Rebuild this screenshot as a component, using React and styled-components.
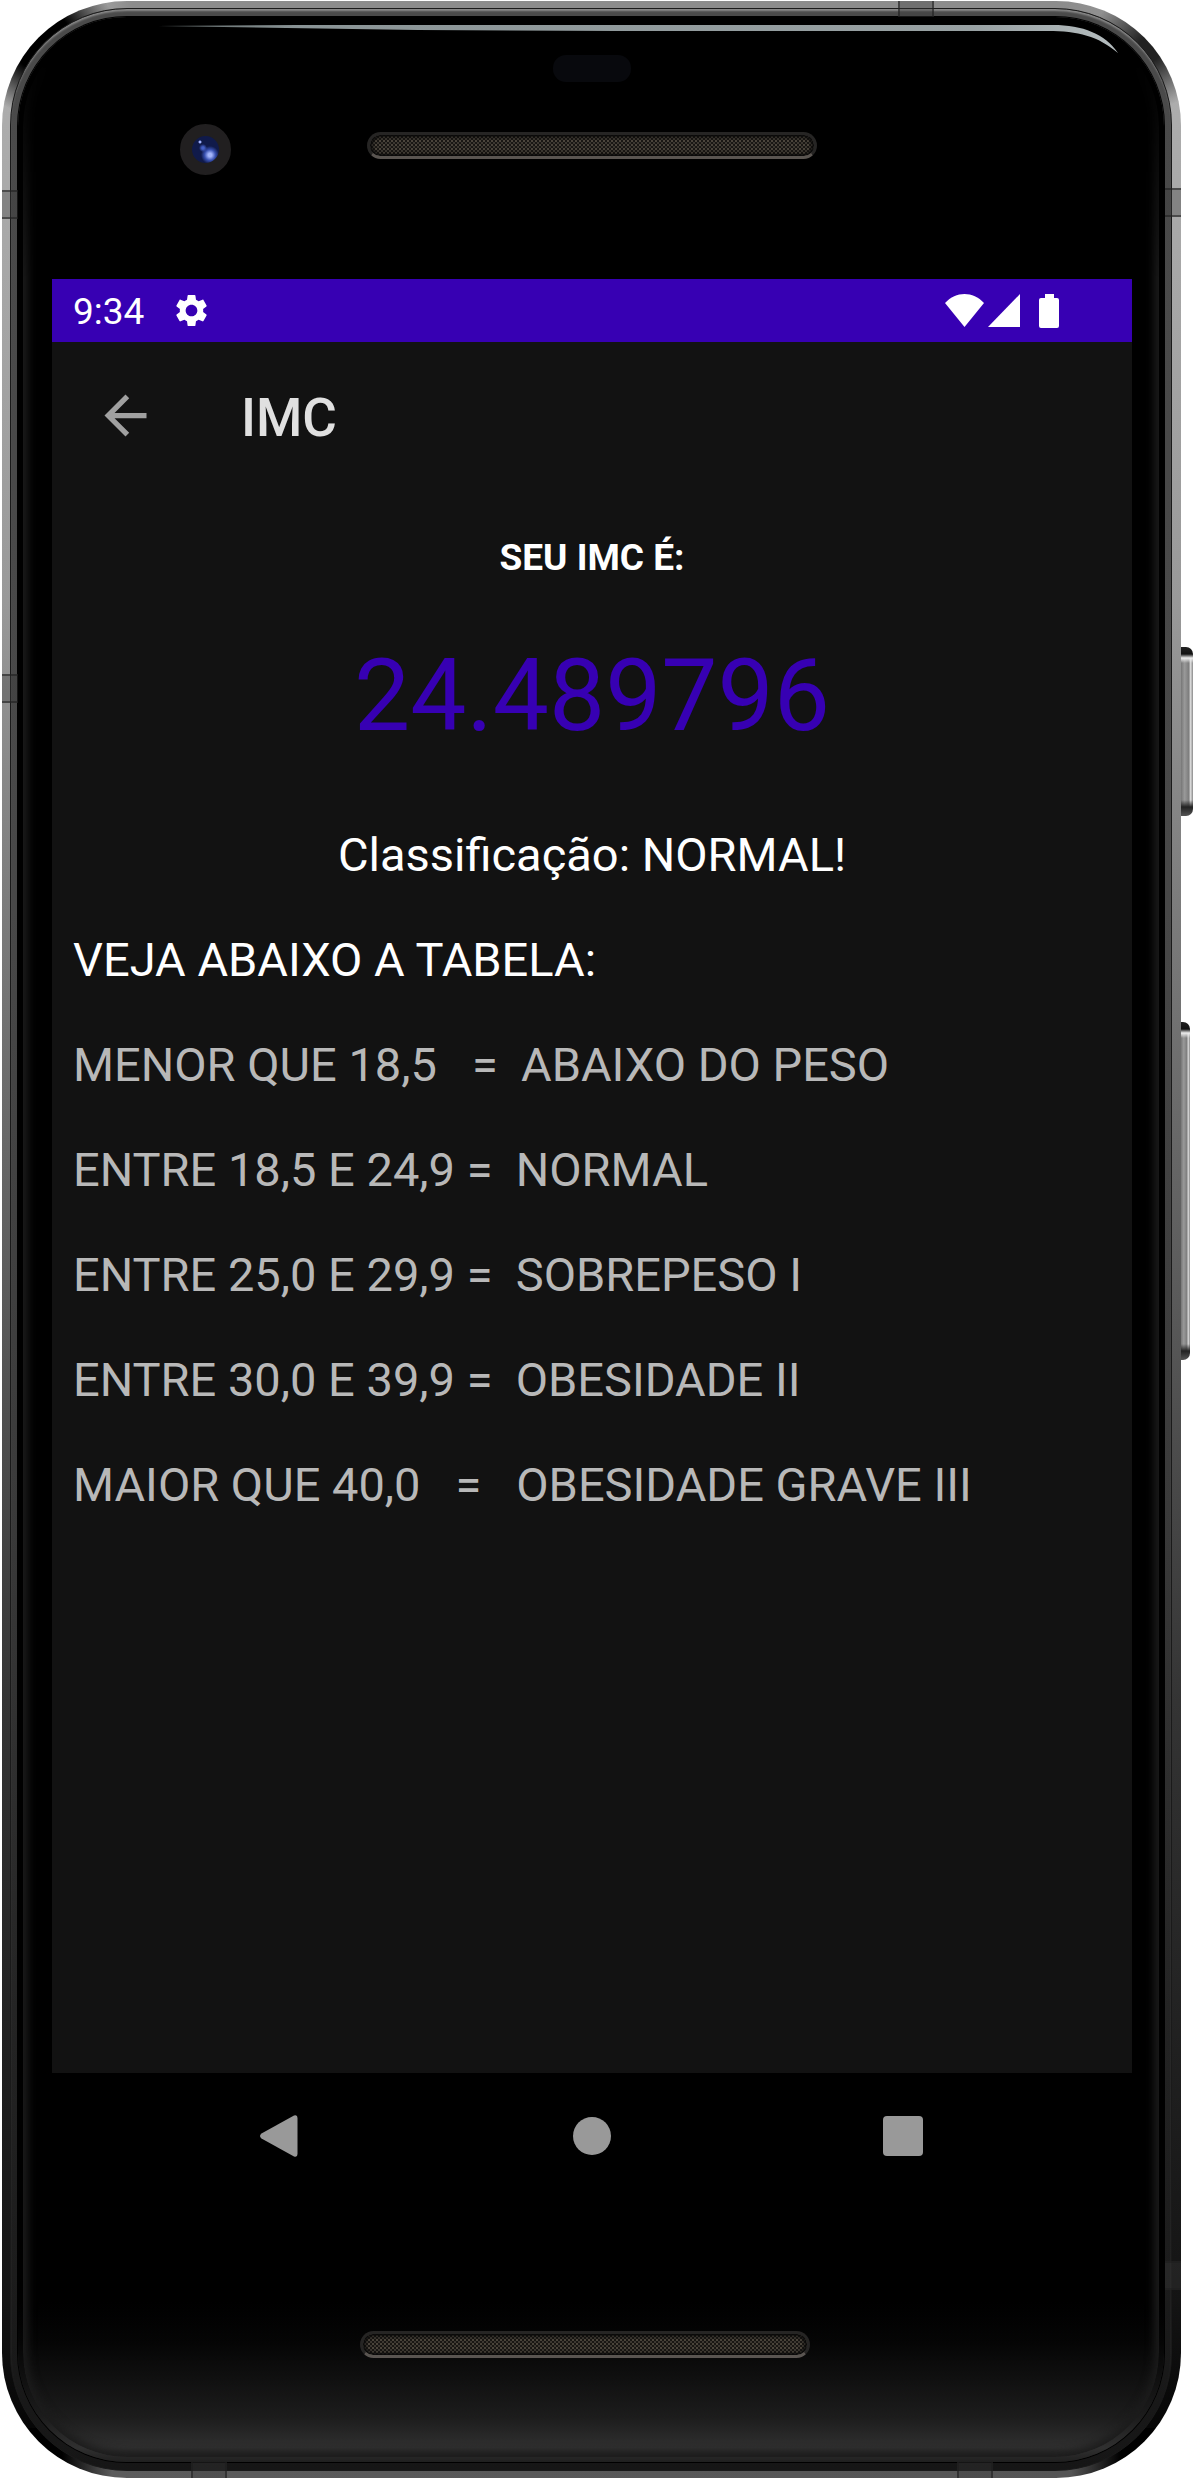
import React from "react";
import styled, { createGlobalStyle } from "styled-components";

const GlobalStyle = createGlobalStyle`
  *, *::before, *::after { box-sizing: border-box; }
  body {
    margin: 0;
    background: #fff;
    font-family: Roboto, "Noto Sans", sans-serif;
  }
`;

/* ---------- Handset ---------- */

const Page = styled.div`
  display: flex;
  min-height: 100vh;
  padding: 1px 13px 2px 2px;
`;

const Chassis = styled.div`
  position: relative;
  display: flex;
  flex: 1;
  min-width: 0;
  padding: 7px 9px 7px 8px;
  border-radius: 125px;
  background:
    radial-gradient(circle 75px at 40px 40px, #000 40%, rgba(0, 0, 0, 0) 100%),
    radial-gradient(circle 60px at calc(100% - 32px) 48px, #222 20%, rgba(34, 34, 34, 0) 100%),
    linear-gradient(90deg, rgba(0, 0, 0, 0) 70px, #8c8c8c 130px, #8c8c8c calc(100% - 120px), #999 100%) top / 100% 40px no-repeat,
    linear-gradient(90deg, #000 60px, #5c5c5c 110px, #555 calc(100% - 110px), #000 calc(100% - 60px)) bottom / 100% 50px no-repeat,
    linear-gradient(180deg, #b0b0b0 0, #a6a6a6 300px, #999 600px, #7c7c7c 900px, #5a5a5a 1300px, #343434 1700px, #202020 2050px, #141414 2300px, #000 100%);
`;

const Rim = styled.div`
  display: flex;
  flex: 1;
  min-width: 0;
  padding: 8px 7px;
  border: 1px solid #1a1a1a;
  border-radius: 117px;
  background: linear-gradient(180deg, #4a4a4a 0, #484848 900px, #3a3a3a 1500px, #242424 2000px, #161616 100%);
  box-shadow: inset 0 3px 2px -1px #8a8a8a;
`;

const Glass = styled.div`
  position: relative;
  display: flex;
  flex: 1;
  flex-direction: column;
  min-width: 0;
  padding: 0 32px 0 34px;
  border-radius: 109px;
  background: linear-gradient(0deg, #202020 0, #303030 14px, #272727 28px, #1c1c1c 45px, #111 80px, #050505 120px, #000 160px);
  box-shadow: 0 0 0 1px #000;

  &::before {
    content: "";
    position: absolute;
    inset: 5px;
    border-radius: 104px;
    box-shadow: inset 0 0 8px 5px #1c1c1c;
    mask-image: linear-gradient(180deg, transparent 40px, #000 260px);
    pointer-events: none;
  }
`;

const Glare = styled.svg`
  position: absolute;
  top: 7px;
  left: 0;
  width: 100%;
  height: 32px;
`;

const Seam = styled.span`
  position: absolute;
  z-index: 1;
  border: 0 solid rgba(30, 30, 30, 0.55);
  background: rgba(60, 60, 60, 0.35);
`;

const SideSeam = styled(Seam)`
  top: ${(p) => p.$y}px;
  ${(p) => p.$side}: 0;
  width: 16px;
  height: 29px;
  border-width: 2px 0;
`;

const EdgeSeam = styled(Seam)`
  ${(p) => p.$edge}: 0;
  left: ${(p) => p.$x}%;
  width: 36px;
  height: 16px;
  border-width: 0 2px;
`;

const SideKey = styled.span`
  position: absolute;
  top: ${(p) => p.$y}px;
  left: 100%;
  width: ${(p) => p.$width}px;
  height: ${(p) => p.$length}px;
  border-radius: 0 7px 7px 0;
  background:
    linear-gradient(180deg, #222 0, #111 7px, #eee 11px, rgba(255, 255, 255, 0) 16px, rgba(0, 0, 0, 0) calc(100% - 16px), #222 calc(100% - 9px), #555 100%),
    linear-gradient(90deg, #777 0, #999 30%, #7d7d7d 65%, #ddd 80%, #888 100%);
`;

const TopBezel = styled.div`
  display: flex;
  flex-direction: column;
  align-items: center;
  gap: 42px;
  height: 262px;
  padding-top: 38px;
`;

const Sensor = styled.span`
  width: 78px;
  height: 27px;
  border-radius: 13px;
  background: #08090d;
`;

const Camera = styled.span`
  width: 51px;
  height: 51px;
  margin-left: 128px;
  border: 12px solid #211f20;
  border-radius: 50%;
  background:
    radial-gradient(circle 2px at 8px 6px, #9fb0ff 40%, rgba(0, 0, 0, 0) 100%),
    radial-gradient(circle 4px at 11px 12px, #4560c8 30%, rgba(0, 0, 0, 0) 100%),
    radial-gradient(circle 9px at 18px 19px, #a3b4fa 20%, #3850b0 60%, rgba(20, 30, 90, 0) 100%),
    #101a4a;
`;

const Speaker = styled.span`
  width: 450px;
  max-width: 100%;
  height: 27px;
  border: 3px solid #262524;
  border-bottom-color: #5a5551;
  border-radius: 14px;
  background:
    radial-gradient(circle, #50493f 22%, rgba(0, 0, 0, 0) 60%) 0 0 / 4px 4px,
    radial-gradient(circle, #403b34 22%, rgba(0, 0, 0, 0) 60%) 2px 2px / 4px 4px,
    #0c0b0a;
  box-shadow: inset 0 0 3px 2px #080808;
`;

const EarpieceRow = styled.div`
  display: grid;
  grid-template-columns: 1fr 450px 1fr;
  align-items: start;
  align-self: stretch;

  ${Speaker} {
    margin-top: 8px;
  }
`;

const BottomBezel = styled.div`
  display: flex;
  justify-content: center;
  height: 263px;
  padding: 132px 14px 0 0;
`;

/* ---------- Android screen ---------- */

const Screen = styled.div`
  display: flex;
  flex: 1;
  flex-direction: column;
  min-width: 0;
  background: #121212;
`;

const StatusBar = styled.header`
  display: flex;
  align-items: center;
  gap: 28px;
  height: 63px;
  padding: 0 73px 0 21px;
  background: #3700b3;
  color: #fff;
`;

const Clock = styled.time`
  padding-top: 3px;
  font-size: 37px;
  line-height: 42px;
`;

const StatusIcons = styled.div`
  display: flex;
  align-items: center;
  margin-left: auto;
`;

const Glyph = styled.svg`
  display: block;
  flex: none;
  width: ${(p) => p.$w}px;
  height: ${(p) => p.$h}px;
  fill: currentColor;
`;

const AppBar = styled.div`
  display: flex;
  align-items: center;
  gap: 84px;
  height: 147px;
  padding: 0 42px;
`;

const IconButton = styled.button`
  display: flex;
  align-items: center;
  justify-content: center;
  padding: 0;
  border: 0;
  background: none;
  color: ${(p) => p.$color};
  cursor: pointer;
`;

const Title = styled.h1`
  margin: 0;
  padding-top: 4px;
  color: #e0e0e0;
  font-size: 53px;
  font-weight: 500;
  line-height: 62px;
`;

const Content = styled.main`
  flex: 1;
  padding: 48px 21px 42px;
  color: #fff;
`;

const ResultLabel = styled.h2`
  margin: 0;
  font-size: 37px;
  font-weight: 700;
  line-height: 42px;
  text-align: center;
`;

const ResultValue = styled.p`
  margin: 52px 0 66px;
  color: #3700b3;
  font-size: 100px;
  line-height: 130px;
  text-align: center;
`;

const Classification = styled.p`
  margin: 0 0 50px;
  font-size: 47px;
  line-height: 55px;
  text-align: center;
`;

const RangesHeading = styled.h3`
  margin: 0;
  font-size: 47px;
  font-weight: 400;
  line-height: 55px;
`;

const RangeList = styled.ul`
  margin: 0;
  padding: 0;
  color: #b8b8b8;
  list-style: none;
`;

const Range = styled.li`
  margin-top: 50px;
  font-size: 47px;
  line-height: 55px;
  white-space: pre-wrap;
`;

const NavBar = styled.nav`
  display: grid;
  grid-template-columns: repeat(3, 1fr);
  height: 126px;
  padding: 0 73px;
`;

const ranges = [
  "MENOR QUE 18,5   =  ABAIXO DO PESO",
  "ENTRE 18,5 E 24,9 =  NORMAL",
  "ENTRE 25,0 E 29,9 =  SOBREPESO I",
  "ENTRE 30,0 E 39,9 =  OBESIDADE II",
  "MAIOR QUE 40,0   =   OBESIDADE GRAVE III",
];

function StatusRow() {
  return (
    <StatusBar>
      <Clock>9:34</Clock>
      <Glyph $w={39} $h={39} viewBox="0 0 24 24" aria-hidden="true">
        <path d="M19.14 12.94c.04-.3.06-.61.06-.94 0-.32-.02-.64-.07-.94l2.03-1.58c.18-.14.23-.41.12-.61l-1.92-3.32c-.12-.22-.37-.29-.59-.22l-2.39.96c-.5-.38-1.03-.7-1.62-.94L14.4 2.81c-.04-.24-.24-.41-.48-.41h-3.84c-.24 0-.43.17-.47.41L9.25 5.35c-.59.24-1.13.57-1.62.94L5.24 5.33c-.22-.08-.47 0-.59.22L2.74 8.87c-.12.21-.08.47.12.61l2.03 1.58c-.05.3-.09.63-.09.94s.02.64.07.94l-2.03 1.58c-.18.14-.23.41-.12.61l1.92 3.32c.12.22.37.29.59.22l2.39-.96c.5.38 1.03.7 1.62.94l.36 2.54c.05.24.24.41.48.41h3.84c.24 0 .44-.17.47-.41l.36-2.54c.59-.24 1.13-.56 1.62-.94l2.39.96c.22.08.47 0 .59-.22l1.92-3.32c.12-.22.07-.47-.12-.61l-2.01-1.58zM12 15.6c-1.98 0-3.6-1.62-3.6-3.6s1.62-3.6 3.6-3.6 3.6 1.62 3.6 3.6-1.62 3.6-3.6 3.6z" />
      </Glyph>
      <StatusIcons>
        <Glyph $w={43} $h={34} viewBox="0 0 43 34" aria-hidden="true">
          <path d="M0 9C11-3 28-3 39 9L19.500 33z" />
        </Glyph>
        <Glyph $w={51} $h={34} viewBox="0 0 51 34" aria-hidden="true">
          <path d="M32 0V33H0z" />
        </Glyph>
        <Glyph $w={20} $h={34} viewBox="0 0 20 34" aria-hidden="true">
          <path d="M6 0h9v4h3a2 2 0 0 1 2 2v26a2 2 0 0 1-2 2H2a2 2 0 0 1-2-2V6a2 2 0 0 1 2-2h4z" />
        </Glyph>
      </StatusIcons>
    </StatusBar>
  );
}

function Navigation() {
  return (
    <NavBar aria-label="Sistema">
      <IconButton type="button" aria-label="Voltar" $color="#999">
        <Glyph $w={42} $h={42} viewBox="0 0 42 42" aria-hidden="true">
          <path d="M1.500 18.500 34 .6Q37.500-.6 37.500 3v36q0 3.600-3.500 2.400L1.500 23.500q-3-2.500 0-5z" />
        </Glyph>
      </IconButton>
      <IconButton type="button" aria-label="Início" $color="#999">
        <Glyph $w={38} $h={38} viewBox="0 0 38 38" aria-hidden="true">
          <circle cx="19" cy="19" r="19" />
        </Glyph>
      </IconButton>
      <IconButton type="button" aria-label="Recentes" $color="#999">
        <Glyph $w={40} $h={40} viewBox="0 0 40 40" aria-hidden="true">
          <rect width="40" height="40" rx="4" />
        </Glyph>
      </IconButton>
    </NavBar>
  );
}

export default function App() {
  return (
    <>
      <GlobalStyle />
      <Page>
        <Chassis>
          <SideSeam $side="left" $y={189} />
          <SideSeam $side="left" $y={673} />
          <SideSeam $side="right" $y={187} />
          <SideSeam $side="right" $y={2260} />
          <EdgeSeam $edge="top" $x={76} />
          <EdgeSeam $edge="bottom" $x={16} />
          <EdgeSeam $edge="bottom" $x={81} />
          <SideKey $y={646} $width={12} $length={169} />
          <SideKey $y={1021} $width={9} $length={338} />
          <Rim>
            <Glass>
              <Glare viewBox="0 0 1146 32" preserveAspectRatio="none" aria-hidden="true">
                <defs>
                  <linearGradient id="glare" x1="0" x2="1" y1="0" y2="0">
                    <stop offset="0" stopColor="#5d6666" />
                    <stop offset="0.15" stopColor="#8a9496" />
                    <stop offset="0.85" stopColor="#98a1a3" />
                    <stop offset="1" stopColor="#b5bdbf" />
                  </linearGradient>
                </defs>
                <path
                  d="M140 2 280 1H1035C1065 1 1087 10 1100 29C1080 12 1060 7 1030 7H600L400 6Z"
                  fill="url(#glare)"
                />
              </Glare>
              <TopBezel>
                <Sensor />
                <EarpieceRow>
                  <Camera />
                  <Speaker />
                </EarpieceRow>
              </TopBezel>
              <Screen>
                <StatusRow />
                <AppBar>
                  <IconButton type="button" aria-label="Navegar para cima" $color="#a0a0a0">
                    <Glyph $w={63} $h={63} viewBox="0 0 24 24" aria-hidden="true">
                      <path d="M20 11H7.830l5.590-5.590L12 4l-8 8 8 8 1.410-1.410L7.830 13H20v-2z" />
                    </Glyph>
                  </IconButton>
                  <Title>IMC</Title>
                </AppBar>
                <Content>
                  <ResultLabel>SEU IMC É:</ResultLabel>
                  <ResultValue>24.489796</ResultValue>
                  <Classification>Classificação: NORMAL!</Classification>
                  <RangesHeading>VEJA ABAIXO A TABELA:</RangesHeading>
                  <RangeList>
                    {ranges.map((range) => (
                      <Range key={range}>{range}</Range>
                    ))}
                  </RangeList>
                </Content>
              </Screen>
              <Navigation />
              <BottomBezel>
                <Speaker />
              </BottomBezel>
            </Glass>
          </Rim>
        </Chassis>
      </Page>
    </>
  );
}
